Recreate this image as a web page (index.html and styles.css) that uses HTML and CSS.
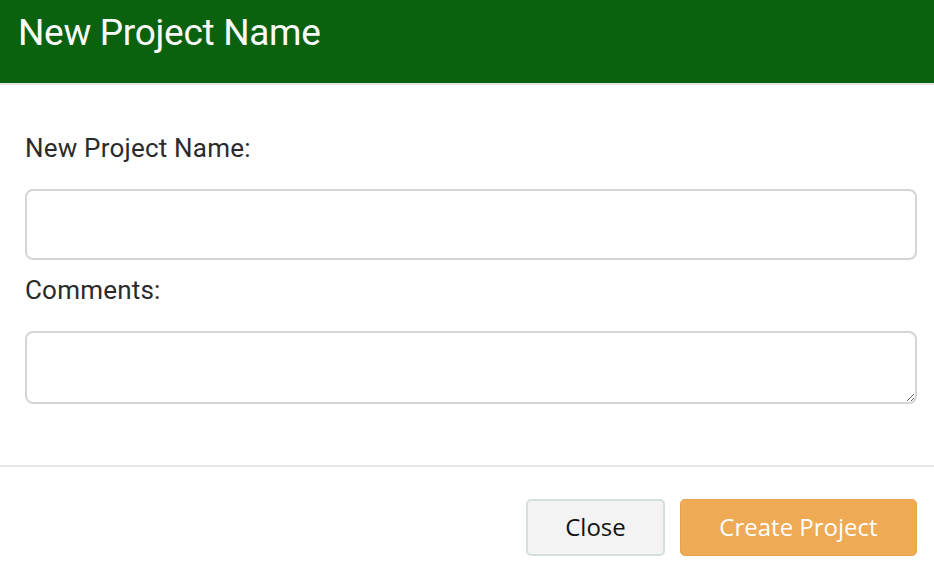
FILE: index.html
```html
<!DOCTYPE html>
<html>
<head>
<meta charset="utf-8">
<link rel="stylesheet" href="styles.css">
</head>
<body>
<div class="modal">
  <header class="modal-header">
    <h1 class="modal-title">New Project Name</h1>
  </header>
  <div class="modal-body">
    <label class="field-label" for="pname">New Project Name:</label>
    <input class="field-input" id="pname" type="text">
    <label class="field-label" for="pcomments">Comments:</label>
    <textarea class="field-textarea" id="pcomments"></textarea>
  </div>
  <footer class="modal-footer">
    <button class="btn btn-default">Close</button>
    <button class="btn btn-primary">Create Project</button>
  </footer>
</div>
</body>
</html>
```
FILE: styles.css
```css
* { box-sizing: border-box; }
html, body { margin: 0; padding: 0; background: #fff; }
body { width: 934px; height: 570px; overflow: hidden; }
.modal { display: flex; flex-direction: column; }
.modal-header {
  background: #0a620e;
  height: 85px;
  border-bottom: 2px solid #e5e5e5;
  padding: 11px 18px 0;
}
.modal-title {
  margin: 0;
  font-family: Roboto, "Liberation Sans", sans-serif;
  font-weight: 400;
  font-size: 37px;
  line-height: 44px;
  letter-spacing: -0.3px;
  color: #fafafa;
}
.modal-body {
  padding: 48px 17px 0 25px;
  display: flex;
  flex-direction: column;
  height: 382px;
  border-bottom: 2px solid #e5e5e5;
}
.field-label {
  font-family: Roboto, "Liberation Sans", sans-serif;
  font-size: 26px;
  line-height: 30px;
  letter-spacing: 0.2px;
  color: #2b2b2b;
  margin-bottom: 26px;
}
.field-input, .field-textarea {
  width: 892px;
  border: 2px solid #d5d5d5;
  border-radius: 8px;
  background: #fff;
  font-family: "Open Sans", sans-serif;
  font-size: 18px;
  outline: none;
  flex-shrink: 0;
}
.field-input { height: 71px; margin-bottom: 15px; }
.field-textarea { height: 73px; resize: vertical; }
.modal-footer {
  display: flex;
  justify-content: flex-end;
  gap: 15px;
  padding: 32px 17px 0 0;
}
.btn {
  height: 57px;
  border-radius: 5px;
  font-family: "Open Sans", sans-serif;
  font-size: 24px;
  line-height: 1;
  padding: 0 0 2px;
  cursor: pointer;
}
.btn-default {
  width: 139px;
  background: #f3f3f3;
  border: 2px solid #d6dfe0;
  color: #111;
}
.btn-primary {
  width: 237px;
  background: #eeaa55;
  border: 1px solid #e8a24c;
  color: #fff;
}
```
